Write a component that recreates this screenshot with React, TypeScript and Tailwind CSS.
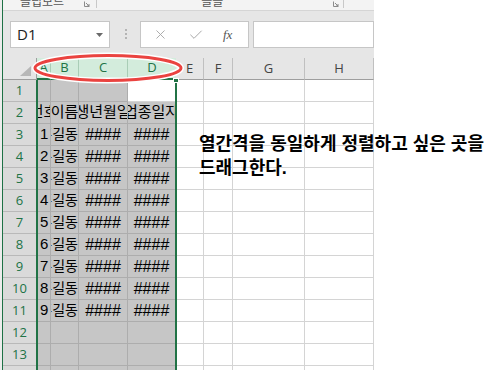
import { Check, X } from "lucide-react";

const font = "font-['Liberation_Sans','Noto_Sans_CJK_KR',sans-serif]";
const uiFont = "font-['Open_Sans','Noto_Sans_CJK_KR',sans-serif]";
const gridCols = "grid grid-cols-[34px_14px_28px_49px_48px_28px_29px_72px_1fr]";

const columns = ["A", "B", "C", "D", "E", "F", "G", "H"];

const rows: string[][] = [
  ["", "", "", ""],
  ["번호", "이름", "생년월일", "업종일자"],
  ...[1, 2, 3, 4, 5, 6, 7, 8, 9].map((n) => [String(n), "홍길동", "####", "####"]),
  ["", "", "", ""],
  ["", "", "", ""],
  ["", "", "", ""],
];

const Cell = ({ text, col, row }: { text: string; col: number; row: number }) => {
  const selected = col < 4 && !(col === 3 && row === 1);
  const align =
    row === 2 ? "justify-center" : col === 0 ? "justify-start pl-[3px]" : col === 1 ? "justify-end" : "justify-center";
  const size = text === "####" ? "text-[16px]" : col === 1 && row > 2 ? "text-[14px]" : "text-[15px]";
  return (
    <div
      className={`flex items-center overflow-hidden whitespace-nowrap border-r border-b text-black ${align} ${size} ${
        selected ? "bg-[#c6c6c6] border-[#adadad]" : "bg-white border-[#d4d4d4]"
      }`}
    >
      {text}
    </div>
  );
};

const Launcher = () => (
  <svg width="6" height="6" viewBox="0 0 6 6" className="mt-[1px]">
    <path d="M0.5 0.5V5.5H5.5" fill="none" stroke="#8a8a8a" />
    <path d="M2 2L5 5M5 3V5H3" fill="none" stroke="#8a8a8a" />
  </svg>
);

export default function App() {
  return (
    <div className={`relative flex w-[486px] h-[370px] overflow-hidden bg-white ${font}`}>
      {/* window edge */}
      <div className="shrink-0 w-[3px] h-full bg-[#ececec] border-r border-[#1e7145]" />

      <div className="flex flex-col shrink-0 w-[371px] h-full overflow-hidden">
        {/* ribbon group labels, cut off at the top */}
        <div className={`shrink-0 flex items-start h-[11px] overflow-hidden bg-[#f3f3f3] border-b border-[#d5d5d5] text-[12px] leading-[12px] text-[#555] ${uiFont}`}>
          <span className="ml-[17px] -mt-[4px]">클립보드</span>
          <div className="ml-[20px]">
            <Launcher />
          </div>
          <div className="ml-[6px] w-px h-[8px] bg-[#c8c8c8]" />
          <span className="ml-[104px] -mt-[4px]">글꼴</span>
          <div className="ml-[110px]">
            <Launcher />
          </div>
          <div className="ml-[4px] w-px h-[8px] bg-[#c8c8c8]" />
        </div>

        {/* formula bar */}
        <div className="shrink-0 flex items-start h-[47px] pt-[10px] bg-[#e6e6e6]">
          <div className="ml-[7px] flex items-center justify-between w-[100px] h-[27px] bg-white border border-[#c6c6c6] pl-[6px] pr-[6px]">
            <span className={`text-[15px] text-[#222] ${uiFont}`}>D1</span>
            <svg width="7" height="4" viewBox="0 0 7 4">
              <path d="M0 0H7L3.5 4Z" fill="#6a6a6a" />
            </svg>
          </div>
          <div className="ml-[15px] mt-[8px] flex flex-col gap-[2px]">
            <div className="w-[2px] h-[2px] bg-[#b4b4b4]" />
            <div className="w-[2px] h-[2px] bg-[#b4b4b4]" />
            <div className="w-[2px] h-[2px] bg-[#b4b4b4]" />
          </div>
          <div className="ml-[13px] flex items-center w-[109px] h-[27px] bg-white border border-[#c6c6c6]">
            <X size={15} strokeWidth={1.5} className="ml-[12px] text-[#a8a8a8]" />
            <Check size={16} strokeWidth={1.5} className="ml-[20px] text-[#a8a8a8]" />
            <span className="ml-[19px] font-['Liberation_Serif',serif] italic text-[13px] text-[#555]">fx</span>
          </div>
          <div className="shrink-0 ml-[4px] w-[121px] h-[27px] bg-white border border-[#c6c6c6]" />
        </div>

        {/* column headers */}
        <div className={`shrink-0 ${gridCols} h-[22px] bg-[#e6e6e6] text-[13px] ${uiFont}`}>
          <div className="relative border-r border-b border-[#9e9e9e]">
            <svg width="11" height="10" viewBox="0 0 11 10" className="absolute left-[17px] top-[8px]">
              <path d="M11 0V10H0Z" fill="#b7b7b7" />
            </svg>
          </div>
          {columns.map((c, i) =>
            i < 4 ? (
              <div
                key={c}
                className={`flex items-center justify-center bg-[#d3ecdc] text-[#217346] border-b-2 border-b-[#217346] ${
                  i < 3 ? "border-r border-r-[#a9cdb6]" : ""
                }`}
              >
                {c}
              </div>
            ) : (
              <div key={c} className="flex items-center justify-center text-[#444] border-r border-r-[#c0c0c0] border-b border-b-[#9e9e9e]">
                {c}
              </div>
            )
          )}
        </div>

        {/* sheet rows */}
        <div className="relative shrink-0">
          {rows.map((cells, r) => (
            <div key={r} className={`${gridCols} h-[22px]`}>
              <div className={`flex items-center justify-center bg-[#dadada] border-r border-b border-[#b9b9b9] text-[13px] text-[#217346] ${uiFont}`}>
                {r + 1}
              </div>
              {[0, 1, 2, 3, 4, 5, 6, 7].map((c) => (
                <Cell key={c} text={cells[c] ?? ""} col={c} row={r + 1} />
              ))}
            </div>
          ))}

          {/* selection outline */}
          <div className="absolute top-0 bottom-0 left-[33px] w-[141px] border-x-2 border-[#217346]">
            <div className="absolute -top-[2px] -right-[4px] w-[6px] h-[5px] bg-[#217346] border border-white" />
          </div>
        </div>
      </div>

      {/* annotation: red ellipse around A–D headers */}
      <svg width="158" height="34" viewBox="0 0 158 34" className="absolute left-[29px] top-[51px]">
        <ellipse cx="79" cy="17" rx="73" ry="12.5" fill="none" stroke="#ffffff" strokeWidth="6" />
        <ellipse cx="79" cy="17" rx="73" ry="12.5" fill="none" stroke="#ea4340" strokeWidth="3" />
      </svg>

      <div className="absolute left-[199px] top-[132px] text-[18px] leading-[24px] font-bold text-black whitespace-nowrap">
        <p>열간격을 동일하게 정렬하고 싶은 곳을</p>
        <p>드래그한다.</p>
      </div>
    </div>
  );
}
